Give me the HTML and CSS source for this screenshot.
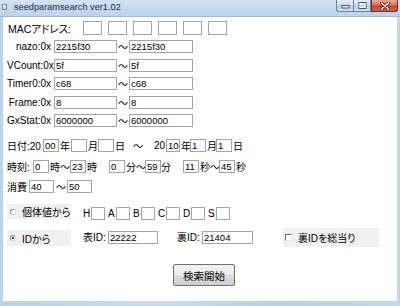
FILE: index.html
```html
<!DOCTYPE html>
<html lang="ja">
<head>
<meta charset="utf-8">
<title>seedparamsearch ver1.02</title>
<link rel="stylesheet" href="styles.css">
</head>
<body>
<div class="window">
  <div class="titlebar">
    <span class="appicon"></span>
    <span class="title">seedparamsearch ver1.02</span>
    <div class="controls">
      <span class="cbtn min"><svg width="9" height="5" viewBox="0 0 9 5"><rect x="1" y="1.5" width="7" height="2.5" fill="#fff" stroke="#44546a" stroke-width="1"/></svg></span>
      <span class="cbtn max"><svg width="9" height="7" viewBox="0 0 9 7"><rect x="1" y="0.5" width="7" height="6" fill="none" stroke="#44546a" stroke-width="1"/><rect x="2" y="1.5" width="5" height="4" fill="none" stroke="#fff" stroke-width="1"/></svg></span>
      <span class="cbtn close"><svg width="10" height="8" viewBox="0 0 10 8"><path d="M1.5 1 L8.5 7 M8.5 1 L1.5 7" stroke="#5a1a10" stroke-width="3" stroke-linecap="round"/><path d="M1.5 1 L8.5 7 M8.5 1 L1.5 7" stroke="#fff" stroke-width="1.6" stroke-linecap="round"/></svg></span>
    </div>
  </div>
  <div class="frame">
    <div class="client">
      <div class="row r-mac">
        <span class="maclabel">MACアドレス:</span>
        <input class="mac" type="text">
        <input class="mac" type="text">
        <input class="mac" type="text">
        <input class="mac" type="text">
        <input class="mac" type="text">
        <input class="mac" type="text">
      </div>

      <div class="params">
        <div class="row prow"><span class="plabel">nazo:0x</span><input class="hex" type="text" value="2215f30"><span class="tilde">～</span><input class="hex hex2" type="text" value="2215f30"></div>
        <div class="row prow"><span class="plabel">VCount:0x</span><input class="hex" type="text" value="5f"><span class="tilde">～</span><input class="hex hex2" type="text" value="5f"></div>
        <div class="row prow"><span class="plabel">Timer0:0x</span><input class="hex" type="text" value="c68"><span class="tilde">～</span><input class="hex hex2" type="text" value="c68"></div>
        <div class="row prow"><span class="plabel">Frame:0x</span><input class="hex" type="text" value="8"><span class="tilde">～</span><input class="hex hex2" type="text" value="8"></div>
        <div class="row prow"><span class="plabel">GxStat:0x</span><input class="hex" type="text" value="6000000"><span class="tilde">～</span><input class="hex hex2" type="text" value="6000000"></div>
      </div>

      <div class="row trow r-date">
        <span class="w36">日付:20</span><input class="sb" type="text" value="00"><span class="w12">年</span><input class="sb" type="text"><span class="w11">月</span><input class="sb" type="text"><span class="w18">日</span><span class="w21">～</span><span class="w13">20</span><input class="sb sb14" type="text" value="10"><span class="w10">年</span><input class="sb" type="text" value="1"><span class="w10">月</span><input class="sb" type="text" value="1"><span>日</span>
      </div>

      <div class="row trow r-time">
        <span class="w26">時刻:</span><input class="sb" type="text" value="0"><span class="w21">時～</span><input class="sb" type="text" value="23"><span class="w23">時</span><input class="sb" type="text" value="0"><span class="w20">分～</span><input class="sb" type="text" value="59"><span class="w22">分</span><input class="sb" type="text" value="11"><span class="w20">秒～</span><input class="sb" type="text" value="45"><span>秒</span>
      </div>

      <div class="row trow r-cons">
        <span class="w22">消費</span><input class="cb" type="text" value="40"><span class="w13 c">～</span><input class="cb" type="text" value="50">
      </div>

      <div class="row r-ivs">
        <label class="radiogrp g1"><span class="radio"></span><span>個体値から</span></label>
        <span class="gl first">H</span><input class="gb" type="text">
        <span class="gl">A</span><input class="gb" type="text">
        <span class="gl">B</span><input class="gb" type="text">
        <span class="gl">C</span><input class="gb" type="text">
        <span class="gl">D</span><input class="gb" type="text">
        <span class="gl">S</span><input class="gb" type="text">
      </div>

      <div class="row r-id">
        <label class="radiogrp g2"><span class="radio on"></span><span>IDから</span></label>
        <span class="idl first">表ID:</span><input class="idb" type="text" value="22222">
        <span class="idl second">裏ID:</span><input class="idb idb2" type="text" value="21404">
        <label class="checkgrp"><span class="check"></span><span>裏IDを総当り</span></label>
      </div>

      <div class="row r-btn">
        <button class="start" type="button">検索開始</button>
      </div>
    </div>
  </div>
</div>
</body>
</html>
```
FILE: styles.css
```css
* { box-sizing: border-box; margin: 0; padding: 0; }
html, body { width: 400px; height: 306px; overflow: hidden; }
body {
  font-family: "Liberation Sans", "Noto Sans CJK JP", sans-serif;
  font-size: 10px;
  color: #000;
  background: #fff;
  font-feature-settings: "palt";
}
.window {
  width: 400px;
  height: 306px;
  display: flex;
  flex-direction: column;
  background: linear-gradient(90deg, #bcd2e9, #c9dcef 40%, #b9d0e8 70%, #c4d8ed);
}
.titlebar {
  height: 17px;
  display: flex;
  align-items: flex-start;
  border-bottom: 1px solid #a3b8cf;
  background: linear-gradient(180deg, #d3e3f3 0%, #c2d7ee 60%, #bcd3eb 100%);
}
.appicon {
  width: 5px;
  height: 6px;
  margin: 4px 0 0 2px;
  background: linear-gradient(180deg, #f4f4f4, #c9d2c9);
  border: 1px solid #7c8c80;
}
.title {
  margin-left: 7px;
  font-size: 9.2px;
  line-height: 15px;
  color: #1c2a3a;
  font-feature-settings: normal;
}
.controls {
  margin-left: auto;
  margin-right: 2px;
  display: flex;
}
.cbtn {
  height: 12px;
  display: flex;
  align-items: center;
  justify-content: center;
  border: 1px solid #6e819b;
  border-top: none;
}
.min {
  width: 17px;
  border-radius: 0 0 0 3px;
  border-right: none;
  background: linear-gradient(180deg, #e4edf7 0%, #cfdcec 48%, #b7cae2 52%, #d3e1f0 100%);
  align-items: flex-end;
  padding-bottom: 2px;
}
.max {
  width: 18px;
  background: linear-gradient(180deg, #e4edf7 0%, #cfdcec 48%, #b7cae2 52%, #d3e1f0 100%);
}
.close {
  width: 27px;
  border-color: #6b2a22;
  border-radius: 0 0 3px 0;
  background: linear-gradient(180deg, #e9a99b 0%, #d8705c 48%, #c4432d 52%, #d6654a 100%);
}
.frame {
  flex: 1;
  display: flex;
  padding: 0 3px 5px 3px;
}
.client {
  flex: 1;
  background: #fff;
  padding-left: 4px;
  display: flex;
  flex-direction: column;
}
.row { display: flex; }

input {
  font: inherit;
  font-size: 9.5px;
  font-feature-settings: normal;
  border: 1px solid #a4a4a4;
  height: 13px;
  padding: 0 0 0 1px;
  background: #fff;
  color: #000;
  outline: none;
  line-height: 11px;
}

/* MAC */
.r-mac { margin-top: 4px; height: 14px; align-items: center; }
.maclabel { width: 76px; padding-left: 1px; font-size: 10.5px; }
.mac { width: 19px; height: 14px; margin-right: 6px; }

/* hex params */
.params { display: flex; flex-direction: column; gap: 5.5px; margin-top: 5px; }
.prow { height: 13px; align-items: center; }
.plabel { width: 47px; text-align: right; padding-right: 3px; }
.hex { width: 63px; }
.hex2 { width: 64px; }
.tilde { width: 12px; text-align: center; }

/* date / time */
.trow { height: 13px; align-items: center; white-space: nowrap; }
.r-date { margin-top: 12px; }
.r-time { margin-top: 8px; }
.r-cons { margin-top: 7px; }
.trow span { padding-left: 1px; }
.sb { width: 16px; }
.sb14 { width: 14px; }
.cb { width: 25px; }
.c { text-align: center; }
.w10 { width: 10px; }
.w11 { width: 11px; }
.w12 { width: 12px; }
.w13 { width: 13px; }
.w18 { width: 18px; }
.w20 { width: 20px; }
.w21 { width: 21px; }
.w22 { width: 22px; }
.w23 { width: 23px; }
.w26 { width: 26px; }
.w36 { width: 36px; }
.trow .w36, .trow .w26, .trow .w22 { padding-left: 0; }

/* radios */
.radiogrp {
  width: 64px;
  background: #f0f0f0;
  display: flex;
  align-items: center;
  padding-left: 3px;
  gap: 6px;
}
.g1 { height: 15px; }
.g2 { height: 16px; margin-top: 2px; }
.radio {
  width: 6px;
  height: 6px;
  border-radius: 50%;
  border: 1px solid #8a8a8a;
  border-right-color: #e0e0e0;
  border-bottom-color: #d0d0d0;
  background: #fff;
  position: relative;
  flex: none;
}
.radio.on::after {
  content: "";
  position: absolute;
  left: 1px;
  top: 1px;
  width: 2px;
  height: 2px;
  border-radius: 50%;
  background: #111;
}

.r-ivs { margin-top: 11px; height: 16px; align-items: flex-start; }
.gl { width: 8px; margin-top: 3px; line-height: 13px; }
.gl.first { margin-left: 12px; }
.gb { width: 14px; margin-top: 3px; margin-right: 3px; }

.r-id { margin-top: 8px; height: 19px; align-items: flex-start; }
.idl { width: 25px; margin-top: 3px; line-height: 13px; }
.idl.first { margin-left: 12px; }
.idl.second { margin-left: 19px; }
.idb { width: 50px; margin-top: 3px; }
.idb2 { width: 51px; }
.checkgrp {
  margin-left: 30px;
  width: 96px;
  height: 19px;
  background: #f0f0f0;
  display: flex;
  align-items: center;
  padding-left: 2px;
  gap: 6px;
}
.check {
  width: 7px;
  height: 7px;
  border-top: 1px solid #6a6a6a;
  border-left: 1px solid #6a6a6a;
  border-right: 1px solid #e8e8e8;
  border-bottom: 1px solid #e8e8e8;
  background: #fff;
  flex: none;
}

.r-btn { margin-top: 17px; padding-left: 166px; }
.start {
  width: 62px;
  height: 22px;
  font: inherit;
  font-size: 10.5px;
  border: 1px solid #707070;
  border-radius: 2px;
  background: linear-gradient(180deg, #f2f2f2 0%, #ebebeb 48%, #dddddd 52%, #cfcfcf 100%);
  color: #000;
}
```
